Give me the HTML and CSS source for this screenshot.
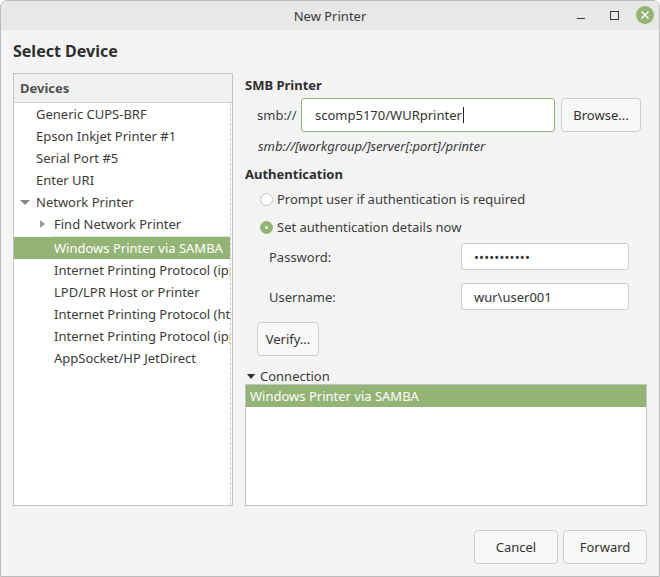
FILE: index.html
```html
<!DOCTYPE html>
<html>
<head>
<meta charset="utf-8">
<link rel="stylesheet" href="styles.css">
</head>
<body>
<div class="window">
  <div class="titlebar">
    <div class="title">New Printer</div>
    <div class="wm">
      <span class="wm-min"></span>
      <span class="wm-max"></span>
      <span class="wm-close"><svg width="18" height="18" viewBox="0 0 18 18"><path d="M5.5 5.5 L12.5 12.5 M12.5 5.5 L5.5 12.5" stroke="#fff" stroke-width="1.4" fill="none"/></svg></span>
    </div>
  </div>
  <div class="body">
    <h1 class="heading">Select Device</h1>
    <div class="main">
      <div class="devices">
        <div class="devices-head">Devices</div>
        <div class="devices-list">
          <div class="row l1">Generic CUPS-BRF</div>
          <div class="row l1">Epson Inkjet Printer #1</div>
          <div class="row l1">Serial Port #5</div>
          <div class="row l1">Enter URI</div>
          <div class="row l1"><span class="exp exp-down"></span>Network Printer</div>
          <div class="row l2 find"><span class="exp exp-right"></span>Find Network Printer</div>
          <div class="row l2 sel">Windows Printer via SAMBA</div>
          <div class="row l2">Internet Printing Protocol (ipp)</div>
          <div class="row l2">LPD/LPR Host or Printer</div>
          <div class="row l2">Internet Printing Protocol (https)</div>
          <div class="row l2">Internet Printing Protocol (ipps)</div>
          <div class="row l2">AppSocket/HP JetDirect</div>
        </div>
      </div>
      <div class="pane">
        <div class="section-title t-smb">SMB Printer</div>
        <div class="smb-row">
          <span class="smb-label">smb://</span>
          <div class="entry smb-entry focused">scomp5170/WURprinter<span class="caret"></span></div>
          <button class="btn browse">Browse...</button>
        </div>
        <div class="hint">smb://[workgroup/]server[:port]/printer</div>
        <div class="section-title t-auth">Authentication</div>
        <div class="radio-row r1"><span class="radio"></span>Prompt user if authentication is required</div>
        <div class="radio-row r2"><span class="radio on"></span>Set authentication details now</div>
        <div class="field-row f1"><span class="field-label">Password:</span><div class="entry field-entry pw">•••••••••••</div></div>
        <div class="field-row f2"><span class="field-label">Username:</span><div class="entry field-entry">wur\user001</div></div>
        <button class="btn verify">Verify...</button>
        <div class="conn"><span class="conn-arrow"></span>Connection</div>
        <div class="conn-list">
          <div class="conn-row sel">Windows Printer via SAMBA</div>
        </div>
      </div>
    </div>
    <div class="footer">
      <button class="btn foot">Cancel</button>
      <button class="btn foot">Forward</button>
    </div>
  </div>
</div>
</body>
</html>
```

FILE: styles.css
```css
* { box-sizing: border-box; }
html, body { margin: 0; padding: 0; background: #ffffff; }
body { font-family: "Noto Sans", "DejaVu Sans", sans-serif; font-size: 13px; color: #3c3c3c; }

.window {
  width: 660px; height: 577px;
  border: 1px solid #bcbcbc;
  border-radius: 7px 7px 0 0;
  background: #f4f4f4;
  display: flex; flex-direction: column;
  overflow: hidden;
}

.titlebar {
  height: 29px; flex: none;
  background: #e8e8e8;
  position: relative;
  display: flex; align-items: center; justify-content: center;
}
.title { font-size: 13px; color: #3a3a3a; line-height: 16px; }
.wm { position: absolute; right: 5px; top: 5px; display: flex; align-items: center; height: 18px; }
.wm-min { width: 8px; height: 1px; background: #3a3a3a; margin-top: 7px; margin-right: 25px; }
.wm-max { width: 9px; height: 9px; border: 1px solid #3a3a3a; margin-right: 17px; }
.wm-close { width: 18px; height: 18px; border-radius: 50%; background: #93b472; display: block; }
.wm-close svg { display: block; }

.body { flex: 1; display: flex; flex-direction: column; padding: 0 12px 12px 12px; }
.heading { margin: 11px 0 0 0; font-size: 16px; line-height: 20px; font-weight: bold; color: #2e2e2e; }

.main { flex: 1; display: flex; gap: 12px; margin-top: 12px; }

.devices {
  width: 220px; flex: none;
  border: 1px solid #c4c4c4;
  background: #ffffff;
  display: flex; flex-direction: column;
}
.devices-head {
  height: 29px; line-height: 29px;
  padding-left: 6px;
  background: #f0f0f0;
  border-bottom: 1px solid #cfcfcf;
  font-weight: bold; color: #505050;
}
.devices-list { flex: 1; border-right: 1px dashed #c8c8c8; margin-right: 1px; overflow: hidden; }
.row { height: 22px; line-height: 22px; white-space: nowrap; position: relative; }
.row.l1 { padding-left: 22px; }
.row.l2 { padding-left: 40px; }
.row.find { height: 24px; line-height: 22px; }
.row.find::after { content: ""; position: absolute; left: 38px; right: 0; bottom: 0; height: 1px; background: #e2e2e2; }
.row.sel { background: #94b475; color: #ffffff; }
.exp { display: inline-block; width: 14px; height: 22px; vertical-align: top; position: relative; margin-left: -16px; margin-right: 2px; }
.exp-down::before {
  content: ""; position: absolute; left: 0px; top: 9px;
  border-left: 5px solid transparent; border-right: 5px solid transparent; border-top: 5px solid #8a8a8a;
}
.exp-right::before {
  content: ""; position: absolute; left: 2px; top: 7px;
  border-top: 4.5px solid transparent; border-bottom: 4.5px solid transparent; border-left: 5px solid #9a9a9a;
}

.pane { flex: 1; display: flex; flex-direction: column; }
.section-title { font-weight: bold; line-height: 16px; color: #2e2e2e; }
.t-smb { margin-top: 4px; }
.smb-row { display: flex; align-items: center; margin-top: 5px; height: 34px; }
.smb-label { width: 56px; padding-left: 12px; flex: none; }
.entry {
  background: #ffffff; border: 1px solid #cbcbcb; border-radius: 3px;
  display: flex; align-items: center; color: #333;
}
.smb-entry { width: 254px; height: 34px; padding-left: 13px; }
.entry.focused { border-color: #94b475; }
.caret { display: inline-block; width: 1px; height: 16px; background: #222; margin-left: 1px; }
.btn {
  font-family: inherit; font-size: 13px; color: #333;
  background: #f8f8f8; border: 1px solid #cdcdcd; border-radius: 4px;
  padding: 0; margin: 0;
}
.browse { width: 80px; height: 34px; margin-left: 6px; }
.hint { font-style: italic; line-height: 16px; margin-top: 6px; padding-left: 13px; color: #3a3a3a; }
.t-auth { margin-top: 12px; }
.radio-row { display: flex; align-items: center; height: 20px; padding-left: 15px; }
.r1 { margin-top: 7px; }
.r2 { margin-top: 8px; }
.radio {
  width: 13px; height: 13px; border-radius: 50%;
  border: 1px solid #c2c2c2; background: #ffffff;
  margin-right: 4px; position: relative; flex: none;
}
.radio.on { background: #94b475; border-color: #94b475; }
.radio.on::after {
  content: ""; position: absolute; left: 4px; top: 4px; width: 3px; height: 3px; border-radius: 50%; background: #fff;
}
.field-row { display: flex; align-items: center; height: 27px; }
.f1 { margin-top: 6px; }
.f2 { margin-top: 13px; }
.field-label { width: 216px; padding-left: 24px; flex: none; }
.field-entry { width: 168px; height: 27px; padding-left: 12px; }
.pw { font-size: 13px; letter-spacing: 0.2px; }
.verify { width: 62px; height: 34px; margin-top: 12px; margin-left: 12px; align-self: flex-start; }
.conn { line-height: 15px; margin-top: 13px; padding-left: 2px; display: flex; align-items: center; }
.conn-arrow {
  width: 0; height: 0; margin-right: 5px;
  border-left: 4.5px solid transparent; border-right: 4.5px solid transparent; border-top: 5px solid #2e2e2e;
}
.conn-list { flex: 1; background: #ffffff; border: 1px solid #c4c4c4; }
.conn-row { height: 22px; line-height: 22px; padding-left: 4px; }
.conn-row.sel { background: #94b475; color: #ffffff; }

.footer { display: flex; justify-content: flex-end; gap: 5px; margin-top: 24px; }
.foot { height: 34px; width: 84px; }
```
